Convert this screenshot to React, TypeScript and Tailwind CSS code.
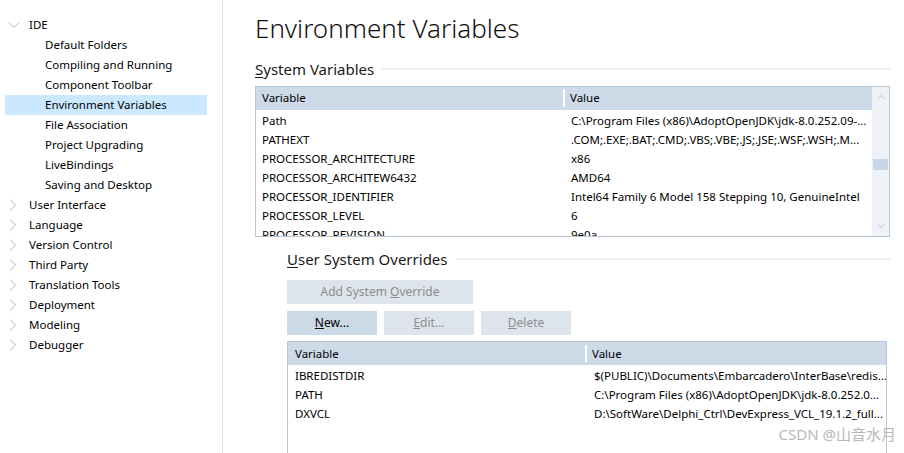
import { ChevronDown, ChevronRight, ChevronUp } from "lucide-react";

const ideChildren = [
  "Default Folders",
  "Compiling and Running",
  "Component Toolbar",
  "Environment Variables",
  "File Association",
  "Project Upgrading",
  "LiveBindings",
  "Saving and Desktop",
];

const topLevel = [
  "User Interface",
  "Language",
  "Version Control",
  "Third Party",
  "Translation Tools",
  "Deployment",
  "Modeling",
  "Debugger",
];

const systemVars = [
  ["Path", "C:\\Program Files (x86)\\AdoptOpenJDK\\jdk-8.0.252.09-..."],
  ["PATHEXT", ".COM;.EXE;.BAT;.CMD;.VBS;.VBE;.JS;.JSE;.WSF;.WSH;.M..."],
  ["PROCESSOR_ARCHITECTURE", "x86"],
  ["PROCESSOR_ARCHITEW6432", "AMD64"],
  ["PROCESSOR_IDENTIFIER", "Intel64 Family 6 Model 158 Stepping 10, GenuineIntel"],
  ["PROCESSOR_LEVEL", "6"],
  ["PROCESSOR_REVISION", "9e0a"],
];

const overrides = [
  ["IBREDISTDIR", "$(PUBLIC)\\Documents\\Embarcadero\\InterBase\\redis..."],
  ["PATH", "C:\\Program Files (x86)\\AdoptOpenJDK\\jdk-8.0.252.0..."],
  ["DXVCL", "D:\\SoftWare\\Delphi_Ctrl\\DevExpress_VCL_19.1.2_full..."],
];

const font = { fontFamily: '"Noto Sans", "Noto Sans CJK SC", sans-serif' };

function Sidebar() {
  return (
    <div className="w-[223px] shrink-0 border-r border-[#dfe6ee] pt-[15px] text-[11.5px] text-black">
      <div className="flex h-[20px] items-center">
        <ChevronDown className="ml-[4px] h-[20px] w-[20px] text-[#a3a3a3]" strokeWidth={1} />
        <span className="ml-[5px]">IDE</span>
      </div>
      {ideChildren.map((name) => (
        <div
          key={name}
          className={
            name === "Environment Variables"
              ? "ml-[5px] flex h-[20px] w-[202px] items-center bg-[#cce8ff] pl-[40px]"
              : "flex h-[20px] items-center pl-[45px]"
          }
        >
          {name}
        </div>
      ))}
      {topLevel.map((name) => (
        <div key={name} className="flex h-[20px] items-center">
          <ChevronRight className="ml-[3px] h-[20px] w-[20px] text-[#a3a3a3]" strokeWidth={1} />
          <span className="ml-[6px]">{name}</span>
        </div>
      ))}
    </div>
  );
}

function GroupTitle({ first, rest }: { first: string; rest: string }) {
  return (
    <div className="flex items-center text-[15px] text-[#1a1a1a]">
      <span className="whitespace-nowrap">
        <span className="underline underline-offset-2">{first}</span>
        {rest}
      </span>
      <div className="ml-[8px] h-[2px] flex-1 bg-[#e8edf2]" />
    </div>
  );
}

function SystemTable() {
  return (
    <div className="mt-[5px] flex h-[151px] border border-[#b9c6d3] text-[11.5px]">
      <div className="min-w-0 flex-1 overflow-hidden">
        <div className="flex h-[23px] items-center bg-[#cddbe8]">
          <div className="w-[309px] shrink-0 border-r-2 border-white pl-[6px]">Variable</div>
          <div className="pl-[5px]">Value</div>
        </div>
        <div className="h-[2px]" />
        {systemVars.map(([k, v]) => (
          <div key={k} className="flex h-[19px] items-center">
            <div className="w-[309px] shrink-0 pl-[6px]">{k}</div>
            <div className="whitespace-nowrap pl-[6px]">{v}</div>
          </div>
        ))}
      </div>
      <div className="flex w-[17px] shrink-0 flex-col items-center bg-[#eef2f6]">
        <ChevronUp className="mt-[4px] h-[12px] w-[12px] text-[#a0aab4]" strokeWidth={1.3} />
        <div className="mt-[56px] h-[11px] w-[15px] bg-[#c8d7e6]" />
        <div className="flex-1" />
        <ChevronDown className="mb-[4px] h-[12px] w-[12px] text-[#a0aab4]" strokeWidth={1.3} />
      </div>
    </div>
  );
}

function Btn({ children, enabled, w }: { children: React.ReactNode; enabled?: boolean; w: string }) {
  return (
    <div
      className={`${w} flex h-[24px] items-center justify-center text-[12px] ${
        enabled ? "bg-[#ccd9e6] text-black" : "bg-[#dde4ec] text-[#8c8c8c]"
      }`}
    >
      {children}
    </div>
  );
}

function OverridesTable() {
  return (
    <div className="mt-[6px] h-[120px] overflow-hidden border-l border-t border-r border-[#b9c6d3] text-[11.5px]">
      <div className="flex h-[23px] items-center bg-[#cddbe8]">
        <div className="w-[299px] shrink-0 border-r-2 border-white pl-[7px]">Variable</div>
        <div className="pl-[5px]">Value</div>
      </div>
      <div className="h-[1px]" />
      {overrides.map(([k, v]) => (
        <div key={k} className="flex h-[19px] items-center">
          <div className="w-[299px] shrink-0 pl-[7px]">{k}</div>
          <div className="whitespace-nowrap pl-[7px]">{v}</div>
        </div>
      ))}
    </div>
  );
}

export default function App() {
  return (
    <div className="relative flex h-[453px] w-[904px] overflow-hidden bg-white text-black" style={font}>
      <Sidebar />
      <div className="min-w-0 flex-1 pl-[32px] pr-[14px]">
        <h1 className="mt-[10px] text-[26px] font-light leading-[36px] text-[#111]">Environment Variables</h1>
        <div className="mt-[12px]">
          <GroupTitle first="S" rest="ystem Variables" />
        </div>
        <SystemTable />
        <div className="pl-[32px]">
          <div className="mt-[11px]">
            <GroupTitle first="U" rest="ser System Overrides" />
          </div>
          <div className="mt-[10px]">
            <Btn w="w-[186px]">
              <span>
                Add System <span className="underline">O</span>verride
              </span>
            </Btn>
          </div>
          <div className="mt-[7px] flex gap-[7px]">
            <Btn w="w-[90px]" enabled>
              <span>
                <span className="underline">N</span>ew...
              </span>
            </Btn>
            <Btn w="w-[90px]">
              <span>
                <span className="underline">E</span>dit...
              </span>
            </Btn>
            <Btn w="w-[90px]">
              <span>
                <span className="underline">D</span>elete
              </span>
            </Btn>
          </div>
          <div className="mr-[3px]">
            <OverridesTable />
          </div>
        </div>
      </div>
      <div className="absolute bottom-[8px] right-[8px] text-[15px] text-[#b8b8b8]">CSDN @山音水月</div>
    </div>
  );
}
